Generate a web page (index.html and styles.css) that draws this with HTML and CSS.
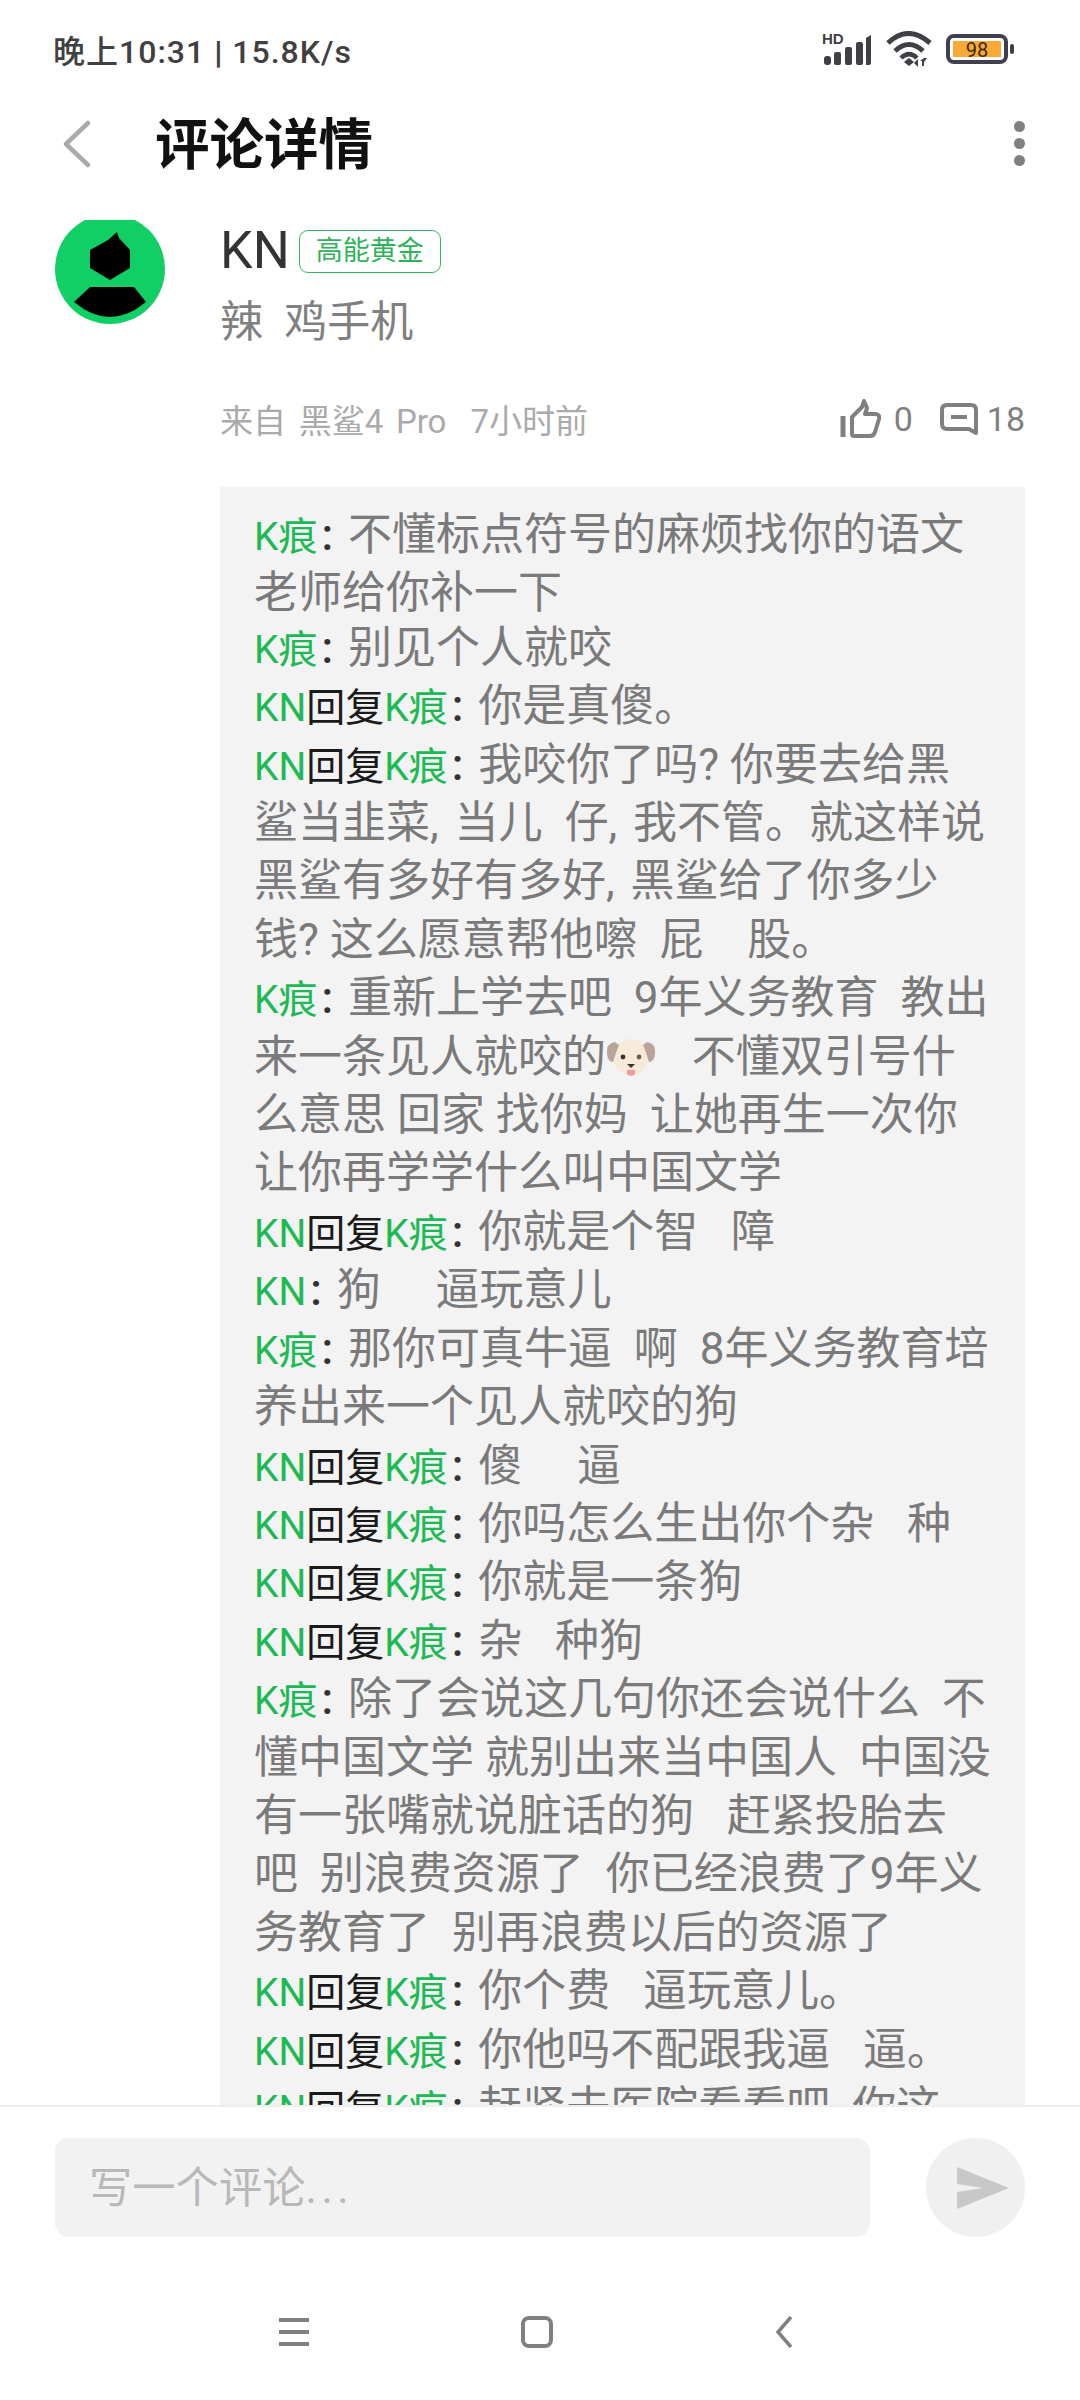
FILE: index.html
```html
<!DOCTYPE html>
<html lang="zh-CN">
<head>
<meta charset="utf-8">
<title>评论详情</title>
<link rel="stylesheet" href="styles.css">
</head>
<body>
<div class="page">
  <main class="main">
    <div class="status">
      <span class="status-text">晚上10:31 <span class="sep">|</span> 15.8K/s</span>
      <div class="status-icons">
        <svg class="ic-signal" width="50" height="34" viewBox="0 0 50 34">
          <text class="hd" x="0" y="12">HD</text>
          <rect x="2" y="24" width="7" height="9" rx="3" fill="#3f3f46"/>
          <rect x="12" y="20" width="7" height="13" rx="2" fill="#3f3f46"/>
          <rect x="23" y="15" width="7" height="18" rx="2" fill="#3f3f46"/>
          <rect x="34" y="10" width="7" height="23" rx="2" fill="#3f3f46"/>
          <path d="M44 6 L49 3 V31 Q49 33 47 33 H44Z" fill="#3f3f46"/>
        </svg>
        <svg class="ic-wifi" width="48" height="36" viewBox="0 0 48 36">
          <path d="M2 12 Q22 -7 44 12" fill="none" stroke="#3f3f46" stroke-width="5"/>
          <path d="M9 20 Q23 7 37 20" fill="none" stroke="#3f3f46" stroke-width="5"/>
          <path d="M15 27 Q23 19 31 27" fill="none" stroke="#3f3f46" stroke-width="4.5"/>
          <path d="M18 31 L23 27 L28 31 L23 35Z" fill="#3f3f46"/>
          <path d="M32 36 V28 L28 32Z M38 27 V35 H36 V30 L34 30Z M41 27 H38 L38 31Z" fill="#3f3f46"/>
        </svg>
        <svg class="ic-batt" width="68" height="30" viewBox="0 0 68 30">
          <rect x="2" y="2" width="58" height="26" rx="6" fill="#fff" stroke="#3f3f50" stroke-width="4"/>
          <rect x="7" y="7" width="48" height="16" fill="#f9a935"/>
          <rect x="64" y="10" width="4" height="10" rx="2" fill="#3f3f46"/>
          <text class="batt-num" x="31" y="23">98</text>
        </svg>
      </div>
    </div>

    <header class="head">
      <svg class="ic-back" width="28" height="48" viewBox="0 0 28 48">
        <path d="M25 3 L3 24 L25 45" fill="none" stroke="#aaa" stroke-width="4.5" stroke-linecap="round" stroke-linejoin="round"/>
      </svg>
      <h1 class="title">评论详情</h1>
      <div class="dots"><i></i><i></i><i></i></div>
    </header>

    <section class="comment">
      <svg class="avatar" width="110" height="104" viewBox="55 220 110 104">
        <circle cx="110" cy="269" r="55" fill="#10cf64"/>
        <path d="M117 232 L119 238 L130 250 V268 L110 280 L90 268 V250 L108 240Z" fill="#000"/>
        <path d="M90 287 H134 L146 302 Q128 317 110 317 Q92 317 74 302Z" fill="#000"/>
      </svg>
      <div class="body">
        <div class="name-row">
          <span class="name">KN</span>
          <span class="badge">高能黄金</span>
        </div>
        <p class="sub">辣  鸡手机</p>
        <div class="meta">
          <span class="from">来自 黑鲨4 Pro</span>
          <span class="time">7小时前</span>
          <span class="stats">
            <svg class="ic-thumb" width="42" height="40" viewBox="0 0 42 40">
              <path d="M12 18 L22 8 L24 2 L27 9 L25 15 H35 Q40 15 39 20 L35 33 Q34 37 30 37 H14 Q12 37 12 35 Z" fill="none" stroke="#808080" stroke-width="4" stroke-linejoin="round"/>
              <path d="M3 17 V38" stroke="#808080" stroke-width="5" fill="none"/>
            </svg>
            <span class="count">0</span>
            <svg class="ic-msg" width="38" height="32" viewBox="0 0 38 32">
              <path d="M7 2 H31 Q36 2 36 7 V30 L29 26 H7 Q2 26 2 21 V7 Q2 2 7 2Z" fill="none" stroke="#808080" stroke-width="4" stroke-linejoin="round"/>
              <path d="M11 14 H27" stroke="#808080" stroke-width="4"/>
            </svg>
            <span class="count">18</span>
          </span>
        </div>
        <div class="replies">
          <p><b>K痕</b><s>:</s> 不懂标点符号的麻烦找你的语文<br>老师给你补一下</p>
          <p class="tight"><b>K痕</b><s>:</s> 别见个人就咬</p>
          <p><b>KN</b><u>回复</u><b>K痕</b><s>:</s> 你是真傻。</p>
          <p><b>KN</b><u>回复</u><b>K痕</b><s>:</s> 我咬你了吗? 你要去给黑<br>鲨当韭菜<span class="comma">,</span> 当儿  仔<span class="comma">,</span> 我不管。就这样说<br>黑鲨有多好有多好<span class="comma">,</span> 黑鲨给了你多少<br>钱? 这么愿意帮他嚓  屁    股。</p>
          <p><b>K痕</b><s>:</s> 重新上学去吧  9年义务教育  教出<br>来一条见人就咬的<svg class="dog" width="50" height="40" viewBox="0 0 50 40"><ellipse cx="25" cy="19" rx="18" ry="18" fill="#f8ead9"/><path d="M9 4 Q0 5 1 16 Q2 24 7 24 Q10 14 13 7Z" fill="#b8a49a"/><path d="M41 4 Q50 5 49 16 Q48 24 43 24 Q40 14 37 7Z" fill="#b8a49a"/><circle cx="17" cy="19" r="2.4" fill="#3d2f2a"/><circle cx="33" cy="19" r="2.4" fill="#6d5a50"/><path d="M21 26 H29 L25 30Z" fill="#3d2f2a"/><path d="M21 32 H29 V36 Q25 40 21 36Z" fill="#ef9aa5"/></svg>   不懂双引号什<br>么意思 回家 找你妈  让她再生一次你<br>让你再学学什么叫中国文学</p>
          <p><b>KN</b><u>回复</u><b>K痕</b><s>:</s> 你就是个智   障</p>
          <p><b>KN</b><s>:</s> 狗     逼玩意儿</p>
          <p><b>K痕</b><s>:</s> 那你可真牛逼  啊  8年义务教育培<br>养出来一个见人就咬的狗</p>
          <p><b>KN</b><u>回复</u><b>K痕</b><s>:</s> 傻     逼</p>
          <p><b>KN</b><u>回复</u><b>K痕</b><s>:</s> 你吗怎么生出你个杂   种</p>
          <p><b>KN</b><u>回复</u><b>K痕</b><s>:</s> 你就是一条狗</p>
          <p><b>KN</b><u>回复</u><b>K痕</b><s>:</s> 杂   种狗</p>
          <p><b>K痕</b><s>:</s> 除了会说这几句你还会说什么  不<br>懂中国文学 就别出来当中国人  中国没<br>有一张嘴就说脏话的狗   赶紧投胎去<br>吧  别浪费资源了  你已经浪费了9年义<br>务教育了  别再浪费以后的资源了</p>
          <p><b>KN</b><u>回复</u><b>K痕</b><s>:</s> 你个费   逼玩意儿。</p>
          <p><b>KN</b><u>回复</u><b>K痕</b><s>:</s> 你他吗不配跟我逼   逼。</p>
          <p><b>KN</b><u>回复</u><b>K痕</b><s>:</s> 赶紧去医院看看吧  你这</p>
        </div>
      </div>
    </section>
  </main>

  <footer class="foot">
    <div class="compose">
      <div class="input">写一个评论<span class="ell">...</span></div>
      <div class="send">
        <svg width="52" height="42" viewBox="0 0 52 42"><path d="M0 0 L52 21 L0 42 V25 L26 21 L0 17Z" fill="#c8c8c8"/></svg>
      </div>
    </div>
    <nav class="nav">
      <svg width="30" height="28" viewBox="0 0 30 28"><path d="M0 2 H30 M0 14 H30 M0 26 H30" stroke="#808080" stroke-width="4"/></svg>
      <svg width="32" height="32" viewBox="0 0 32 32"><rect x="2" y="2" width="28" height="28" rx="6" fill="none" stroke="#808080" stroke-width="4"/></svg>
      <svg width="18" height="32" viewBox="0 0 18 32"><path d="M16 1 L3 16 L16 31" fill="none" stroke="#808080" stroke-width="3.5"/></svg>
    </nav>
  </footer>
</div>
</body>
</html>
```
FILE: styles.css
```css
* { box-sizing: border-box; }
html, body { margin: 0; padding: 0; background: #fff; }
body { font-family: Roboto, "Noto Sans CJK SC", sans-serif; }
.page { width: 1080px; height: 2400px; display: flex; flex-direction: column; overflow: hidden; }
.main { flex: 1; min-height: 0; overflow: hidden; }

.status { height: 98px; display: flex; align-items: center; justify-content: space-between; padding: 0 66px 0 53px; }
.status-text { font-size: 32px; font-weight: 500; color: #404040; white-space: pre; letter-spacing: 1px; }
.sep { font-weight: 900; }
.status-icons { display: flex; align-items: center; gap: 12px; }
.ic-signal { margin-right: 2px; }
.hd { font: 700 15px "Liberation Sans", sans-serif; fill: #3f3f46; }
.batt-num { font: 400 20px Roboto, sans-serif; fill: #3a2a10; text-anchor: middle; }

.head { height: 94px; display: flex; align-items: center; padding: 0 55px 0 63px; }
.ic-back { flex: none; margin-bottom: 3px; }
.title { margin: 0 0 0 64px; font-size: 54.5px; font-weight: 700; color: #111; line-height: 94px; flex: 1; }
.dots { display: flex; flex-direction: column; gap: 6px; margin-bottom: 4px; }
.dots i { display: block; width: 11px; height: 11px; border-radius: 50%; background: #808080; }

.comment { margin-top: 28px; padding: 0 55px; display: flex; gap: 55px; align-items: flex-start; }
.avatar { flex: none; display: block; }
.body { flex: 1; min-width: 0; }
.name-row { display: flex; align-items: center; height: 50px; margin-top: 6px; }
.name { font-size: 52px; line-height: 50px; color: #333; font-weight: 400; }
.badge { margin-left: 9px; width: 142px; height: 43px; border: 1.5px solid #3bb266; border-radius: 9px; color: #2fb35a; font-size: 27px; line-height: 40px; text-align: center; }
.sub { margin: 18px 0 0; font-size: 43px; line-height: 56px; color: #808080; white-space: pre; }
.meta { display: flex; align-items: center; height: 40px; margin-top: 49px; font-size: 33px; color: #aaa; }
.from { word-spacing: 4.5px; }
.time { margin-left: 24px; }
.stats { margin-left: auto; display: flex; align-items: center; color: #808080; font-size: 34px; }
.ic-thumb { display: block; margin-right: 12px; }
.ic-msg { display: block; margin: 0 9px 0 27px; }

.replies { margin-top: 48px; background: #f3f3f3; padding: 19px 20px 40px 34px; color: #7a7a7a; font-size: 44px; line-height: 58.4px; height: 1700px; }
.replies p { margin: 0; white-space: pre; }
.replies .tight { margin-top: -4px; }
.replies b { font-weight: 400; font-size: 39px; line-height: 1; color: #1db954; }
.replies u { text-decoration: none; font-size: 39px; line-height: 1; color: #1a1a1a; }
.replies s { text-decoration: none; color: #333; font-weight: 500; margin: 0 4px 0 4px; }
.comma { margin-right: 5px; }
.dog { vertical-align: -6px; margin-right: 3px; }

.foot { flex: none; height: 295px; background: #fff; border-top: 2px solid #eee; padding-top: 31px; }
.compose { display: flex; gap: 56px; padding: 0 55px; }
.input { flex: 1; height: 99px; border-radius: 14px; background: #f2f2f2; padding-left: 34px; font-size: 43.3px; line-height: 102px; color: #b8b8b8; }
.ell { letter-spacing: 4.5px; }
.send { flex: none; width: 99px; height: 99px; border-radius: 50%; background: #f0f0f0; display: flex; align-items: center; justify-content: center; padding-left: 15px; }
.nav { display: flex; align-items: center; margin-top: 79px; padding-left: 279px; gap: 212px; }
.nav svg:last-child { margin-left: 10px; }
```
